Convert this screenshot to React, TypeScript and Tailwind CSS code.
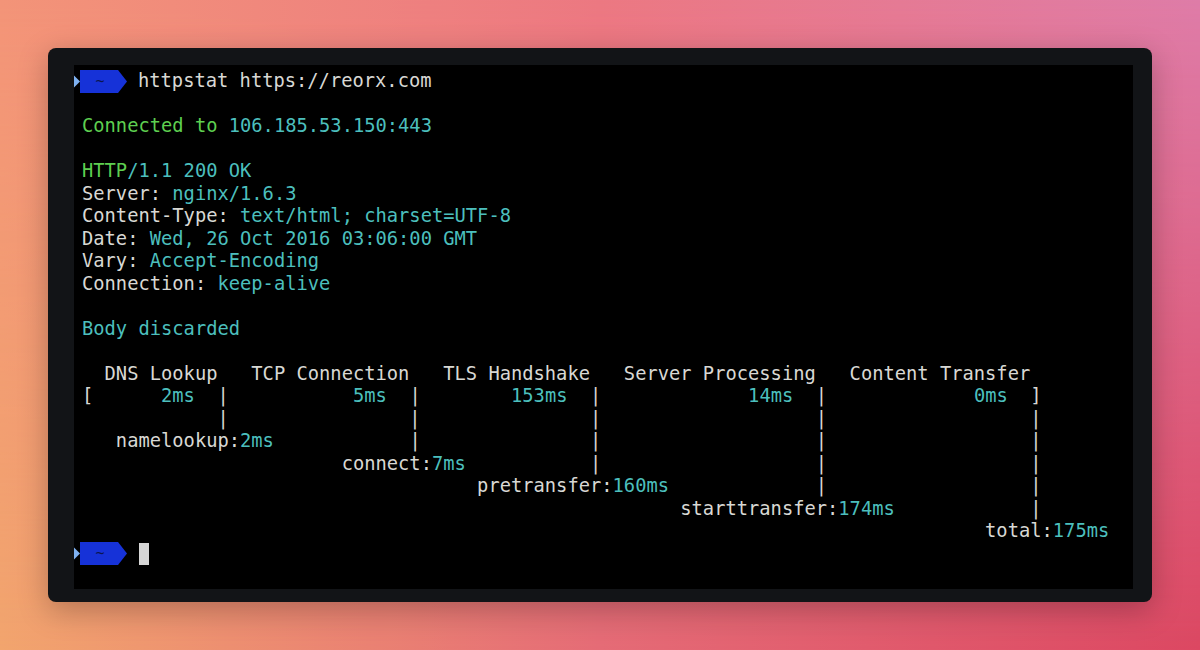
import React from "react"

const W = "text-[#d8d8d4]"
const C = "text-[#4cbfbd]"
const G = "text-[#5ecf50]"

type Seg = [string, string]

const sp = (n: number) => " ".repeat(n)

const output: Seg[][] = [
  [],
  [["Connected to ", G], ["106.185.53.150:443", C]],
  [],
  [["HTTP", G], ["/1.1 200 OK", C]],
  [["Server: ", W], ["nginx/1.6.3", C]],
  [["Content-Type: ", W], ["text/html; charset=UTF-8", C]],
  [["Date: ", W], ["Wed, 26 Oct 2016 03:06:00 GMT", C]],
  [["Vary: ", W], ["Accept-Encoding", C]],
  [["Connection: ", W], ["keep-alive", C]],
  [],
  [["Body discarded", C]],
  [],
  [["  DNS Lookup   TCP Connection   TLS Handshake   Server Processing   Content Transfer", W]],
  [
    ["[" + sp(6), W],
    ["2ms", C],
    ["  |" + sp(11), W],
    ["5ms", C],
    ["  |" + sp(8), W],
    ["153ms", C],
    ["  |" + sp(13), W],
    ["14ms", C],
    ["  |" + sp(13), W],
    ["0ms", C],
    ["  ]", W],
  ],
  [[sp(12) + "|" + sp(16) + "|" + sp(15) + "|" + sp(19) + "|" + sp(18) + "|", W]],
  [
    [sp(3) + "namelookup:", W],
    ["2ms", C],
    [sp(12) + "|" + sp(15) + "|" + sp(19) + "|" + sp(18) + "|", W],
  ],
  [
    [sp(23) + "connect:", W],
    ["7ms", C],
    [sp(11) + "|" + sp(19) + "|" + sp(18) + "|", W],
  ],
  [
    [sp(35) + "pretransfer:", W],
    ["160ms", C],
    [sp(13) + "|" + sp(18) + "|", W],
  ],
  [
    [sp(53) + "starttransfer:", W],
    ["174ms", C],
    [sp(12) + "|", W],
  ],
  [
    [sp(80) + "total:", W],
    ["175ms", C],
  ],
]

function Prompt() {
  return (
    <svg width="64" height="23" viewBox="0 0 64 23" className="shrink-0">
      <polygon points="0,5.5 6,11.5 0,17.5" fill="#7fb2f2" />
      <polygon points="6,0 44,0 53,11.5 44,23 6,23" fill="#1632d8" />
      <text
        x="26"
        y="15.5"
        textAnchor="middle"
        fontSize="15"
        fontFamily="DejaVu Sans Mono, monospace"
        fill="#0b1550"
      >
        ~
      </text>
    </svg>
  )
}

export default function App() {
  return (
    <div className="relative w-[1200px] h-[650px] overflow-hidden flex p-12 bg-[linear-gradient(to_right,#f2a56e,#e56c76_50%,#dc4862)]">
      {/* top tint, fades out towards the bottom */}
      <div className="absolute inset-0 bg-[linear-gradient(to_right,#f39478,#ec7882_50%,#de7ca8)] [mask-image:linear-gradient(to_bottom,black,transparent)]" />

      <div className="relative flex-1 flex bg-[#121417] rounded-lg pt-[17px] pl-[26px] pr-[19px] pb-[13px] shadow-[0_8px_30px_rgba(0,0,0,0.25)]">
        <div className="flex-1 bg-black pt-[5px] font-['DejaVu_Sans_Mono',monospace] text-[18.75px] leading-[22.5px] whitespace-pre">
          <div className="flex items-center h-[22.5px]">
            <Prompt />
            <span className={W}>httpstat https://reorx.com</span>
          </div>

          {output.map((line, i) => (
            <div key={i} className="pl-[8px] h-[22.5px]">
              {line.map(([text, color], j) => (
                <span key={j} className={color}>
                  {text}
                </span>
              ))}
            </div>
          ))}

          <div className="flex items-center h-[22.5px]">
            <Prompt />
            <span className="ml-[1px] w-[10px] h-[22.5px] bg-[#d6d6d6]" />
          </div>
        </div>
      </div>
    </div>
  )
}
